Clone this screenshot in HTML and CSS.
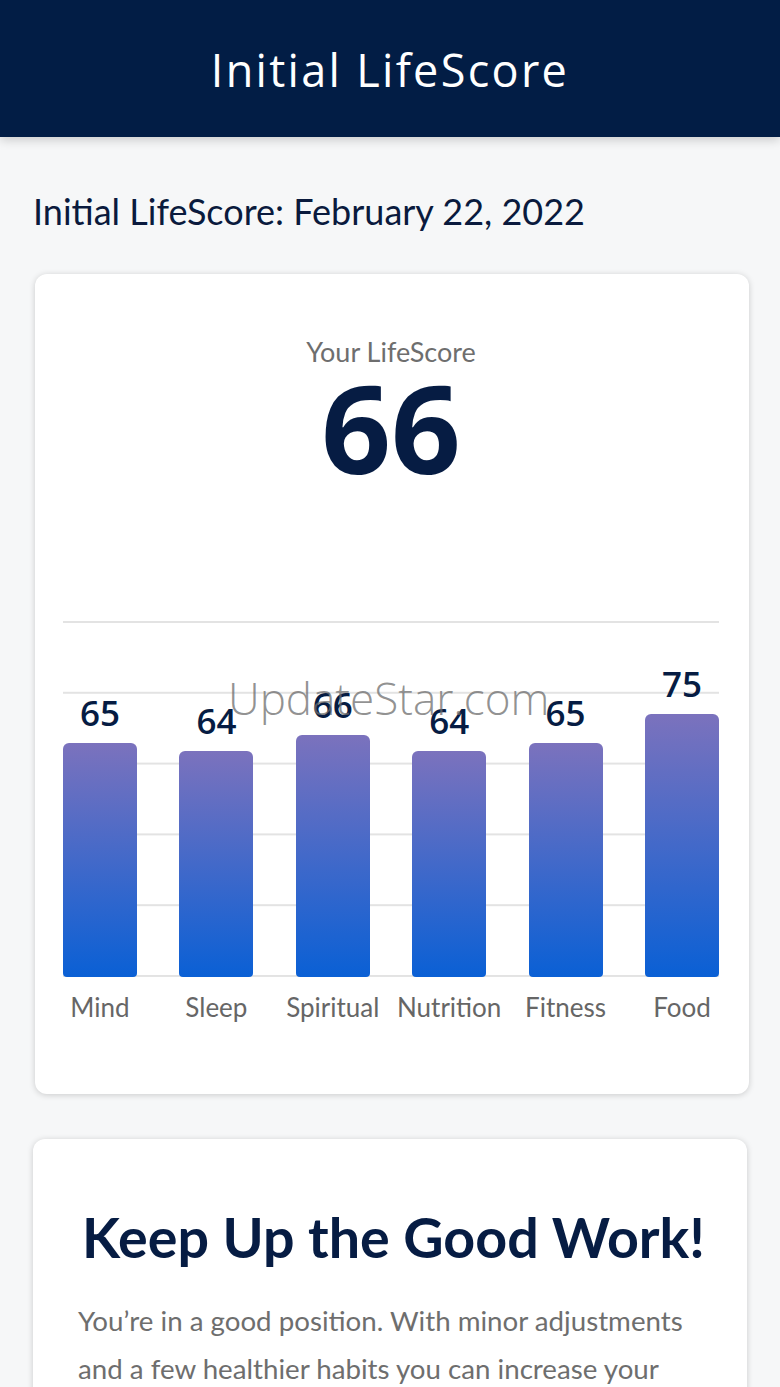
FILE: index.html
```html
<!DOCTYPE html>
<html lang="en">
<head>
<meta charset="utf-8">
<title>Initial LifeScore</title>
<link rel="stylesheet" href="styles.css">
</head>
<body>
<header class="topbar">
  <h1 class="topbar-title">Initial LifeScore</h1>
</header>
<main class="page">
  <h2 class="date-title">Initial LifeScore: February 22, 2022</h2>

  <section class="card score-card">
    <div class="score-label">Your LifeScore</div>
    <div class="score-value">66</div>

    <div class="chart">
      <div class="col"><span class="val">65</span><div class="bar" style="height:234px"></div></div>
      <div class="col"><span class="val">64</span><div class="bar" style="height:226px"></div></div>
      <div class="col"><span class="val">66</span><div class="bar" style="height:242px"></div></div>
      <div class="col"><span class="val">64</span><div class="bar" style="height:226px"></div></div>
      <div class="col"><span class="val">65</span><div class="bar" style="height:234px"></div></div>
      <div class="col"><span class="val">75</span><div class="bar" style="height:263px"></div></div>
    </div>
    <div class="labels">
      <span class="lbl">Mind</span>
      <span class="lbl">Sleep</span>
      <span class="lbl">Spiritual</span>
      <span class="lbl">Nutrition</span>
      <span class="lbl">Fitness</span>
      <span class="lbl">Food</span>
    </div>
  </section>

  <section class="card message-card">
    <h3 class="message-title">Keep Up the Good Work!</h3>
    <p class="message-text">You’re in a good position. With minor adjustments and a few healthier habits you can increase your LifeScore and feel even better every day.</p>
  </section>
</main>
<div class="watermark">UpdateStar.com</div>
</body>
</html>
```

FILE: styles.css
```css
html, body {
  margin: 0;
  padding: 0;
}
body {
  background: #f6f7f8;
  font-family: Lato, "Open Sans", sans-serif;
  color: #061c43;
  position: relative;
  min-height: 1387px;
  height: 1387px;
  overflow: hidden;
}
.topbar {
  height: 137px;
  background: #021d45;
  display: flex;
  align-items: center;
  justify-content: center;
  box-shadow: 0 3px 10px rgba(0, 0, 0, 0.18);
  position: relative;
  z-index: 1;
}
.topbar-title {
  margin: 0;
  color: #ffffff;
  font-family: "Open Sans", sans-serif;
  font-weight: 400;
  font-size: 45px;
  letter-spacing: 2.3px;
  padding-top: 2px;
}
.page {
  padding: 0 31px 0 35px;
}
.date-title {
  margin: 50px 0 0 -2px;
  font-family: Lato, sans-serif;
  font-weight: 400;
  font-size: 36px;
  line-height: 48px;
  color: #0a1a3d;
}
.card {
  background: #ffffff;
  border-radius: 12px;
  box-shadow: 0 1px 6px rgba(0, 0, 0, 0.18);
}
.score-card {
  margin-top: 39px;
  height: 820px;
  box-sizing: border-box;
  padding: 62px 30px 0 28px;
  display: flex;
  flex-direction: column;
}
.score-label {
  text-align: center;
  color: #6e6e6e;
  font-family: Lato, sans-serif;
  font-size: 27px;
  line-height: 32px;
}
.score-value {
  text-align: center;
  font-family: "Open Sans", sans-serif;
  font-weight: 700;
  font-size: 122px;
  line-height: 120px;
  margin-top: -1px;
  color: #061c43;
}
.chart {
  margin-top: 134px;
  height: 356px;
  display: flex;
  justify-content: space-between;
  align-items: flex-end;
  background-image: linear-gradient(#e3e3e3 2px, transparent 2px);
  background-size: 100% 70.8px;
}
.col {
  width: 74px;
  display: flex;
  flex-direction: column;
  align-items: center;
}
.val {
  font-family: "Open Sans", sans-serif;
  font-weight: 600;
  font-size: 35px;
  line-height: 36px;
  margin-bottom: 12px;
  color: #061c43;
}
.bar {
  width: 100%;
  border-radius: 6px 6px 4px 4px;
  background: linear-gradient(#7b72bd, #0a60d5);
}
.labels {
  margin-top: 12px;
  display: flex;
  justify-content: space-between;
}
.lbl {
  width: 74px;
  display: flex;
  justify-content: center;
  white-space: nowrap;
  color: #666666;
  font-family: Lato, sans-serif;
  font-size: 26px;
  line-height: 36px;
}
.message-card {
  margin: 45px 2px 0 -2px;
  padding: 62px 38px 40px 45px;
  border-radius: 12px 12px 0 0;
}
.message-title {
  margin: 0 -20px;
  text-align: center;
  font-family: Lato, sans-serif;
  font-weight: 700;
  font-size: 55.6px;
  line-height: 72px;
  white-space: nowrap;
  color: #061c43;
}
.message-text {
  margin: 24px 0 0;
  color: #6e6e6e;
  font-family: Lato, sans-serif;
  font-size: 27.7px;
  line-height: 48px;
}
.watermark {
  position: absolute;
  left: 228px;
  top: 668px;
  font-family: "Open Sans", sans-serif;
  font-weight: 300;
  font-size: 44px;
  color: rgba(110, 110, 110, 0.75);
  white-space: nowrap;
  pointer-events: none;
}
```
